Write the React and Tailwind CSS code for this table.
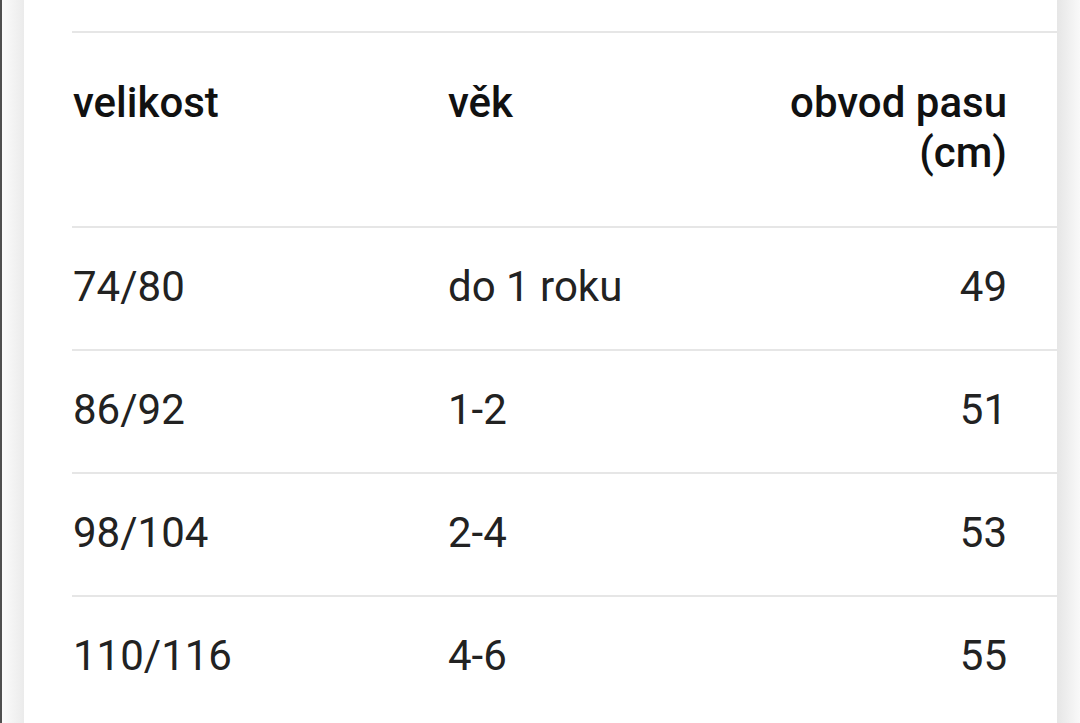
const rows = [
  ["74/80", "do 1 roku", "49"],
  ["86/92", "1-2", "51"],
  ["98/104", "2-4", "53"],
  ["110/116", "4-6", "55"],
];

const SizeTable = () => {
  return (
    <div className="border-t-2 border-[#e6e6e6]">
      <div className="grid grid-cols-[375px_1fr_auto] h-[193px] pt-[45px] pl-[1px] pr-[50px] text-[42px] leading-[50px] font-medium text-[#111]">
        <div>velikost</div>
        <div>věk</div>
        <div className="text-right">
          obvod pasu
          <br />
          (cm)
        </div>
      </div>
      {rows.map((r) => (
        <div
          key={r[0]}
          className="grid grid-cols-[375px_1fr_auto] items-center h-[123px] border-t-2 border-[#e6e6e6] pb-[3px] pl-[1px] pr-[50px] text-[42px] leading-[50px] text-[#222]"
        >
          <div>{r[0]}</div>
          <div>{r[1]}</div>
          <div className="text-right">{r[2]}</div>
        </div>
      ))}
    </div>
  );
};

export default function App() {
  return (
    <div
      className="flex h-[723px] w-[1080px] overflow-hidden bg-white"
      style={{ fontFamily: "Roboto, 'Noto Sans', sans-serif" }}
    >
      <div className="w-[2px] bg-[#505050]" />
      <div className="w-[22px] bg-gradient-to-r from-[#fbfbfb] to-[#ebebeb]" />
      <main className="w-[1033px] pl-[48px] pt-[31px]">
        <SizeTable />
      </main>
      <div className="flex-1 bg-gradient-to-r from-[#e6e6e6] to-[#f9f9f9]" />
    </div>
  );
}
